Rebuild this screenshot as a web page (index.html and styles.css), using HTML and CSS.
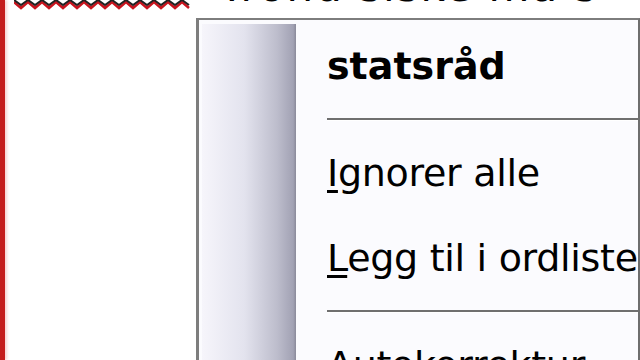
FILE: index.html
```html
<!DOCTYPE html>
<html lang="no">
<head>
    <meta charset="UTF-8">
    <title>Stavekontroll</title>
    <link rel="stylesheet" href="styles.css">
</head>
<body>
    <div class="page">
        <div class="margin-bar"></div>
        <div class="doc">
            <div class="topline">
                <svg class="squiggle" width="178" height="10" viewBox="0 0 178 10">
                    <polyline points="0,2 7,8 14,2 21,8 28,2 35,8 42,2 49,8 56,2 63,8 70,2 77,8 84,2 91,8 98,2 105,8 112,2 119,8 126,2 133,8 140,2 147,8 154,2 161,8 168,2 175,8" fill="none" stroke="#c8141e" stroke-width="2.5"/>
                    <polyline points="0,0 7,5 14,0 21,5 28,0 35,5 42,0 49,5 56,0 63,5 70,0 77,5 84,0 91,5 98,0 105,5 112,0 119,5 126,0 133,5 140,0 147,5 154,0 161,5 168,0 175,5" fill="none" stroke="#222" stroke-width="2"/>
                </svg>
                <div class="doc-text">Trond siske må s</div>
            </div>

            <div class="menu">
                <div class="sidebar"></div>
                <ul class="items">
                    <li class="item suggestion">statsråd</li>
                    <li class="sep"></li>
                    <li class="item"><u>I</u>gnorer alle</li>
                    <li class="item"><u>L</u>egg til i ordliste</li>
                    <li class="sep"></li>
                    <li class="item"><u>A</u>utokorrektur</li>
                </ul>
            </div>
        </div>
    </div>
</body>
</html>
```

FILE: styles.css
```css
html, body { margin: 0; height: 100%; overflow: hidden; background: #fff; }
body { font-family: "DejaVu Sans", Verdana, sans-serif; color: #000; }
.page { display: flex; height: 360px; overflow: hidden; }
.margin-bar { width: 5px; background: #c41c1c; box-shadow: 2px 0 3px rgba(230,120,120,0.35); flex-shrink: 0; }
.doc { flex: 1; display: flex; flex-direction: column; min-height: 0; }

.topline { height: 18px; flex-shrink: 0; display: flex; align-items: flex-start; overflow: hidden; }
.squiggle { margin-left: 9px; flex-shrink: 0; }
.doc-text { margin-left: 27px; font-size: 42px; line-height: 42px; margin-top: -34px; white-space: nowrap; letter-spacing: 2px; }

.menu { margin-left: 191px; width: 436px; flex: 1; min-height: 0; overflow: hidden; display: flex; border-top: 2px solid #7d7d7d; border-left: 3px solid #7d7d7d; border-right: 2px solid #6e6e6e; background: #fbfbfe; padding: 4px 0 0 3px; }
.sidebar { width: 94px; flex-shrink: 0; background: linear-gradient(to right, #f6f5fb 0%, #e3e3ee 45%, #bdbdcc 80%, #a2a2b4 97%, #8a8a9a 100%); }
.items { list-style: none; margin: 0; padding: 0 0 0 31px; flex: 1; }
.item { font-size: 38px; line-height: 85px; height: 85px; white-space: nowrap; letter-spacing: -0.3px; }
.item u { text-decoration-thickness: 3px; text-underline-offset: 4px; }
.suggestion { font-weight: bold; letter-spacing: 0; }
.sep { height: 22px; display: flex; align-items: center; }
.sep::before { content: ""; display: block; width: 100%; height: 2px; background: #6f6f6f; border-bottom: 1px solid #fff; margin-top: -2px; }
```
